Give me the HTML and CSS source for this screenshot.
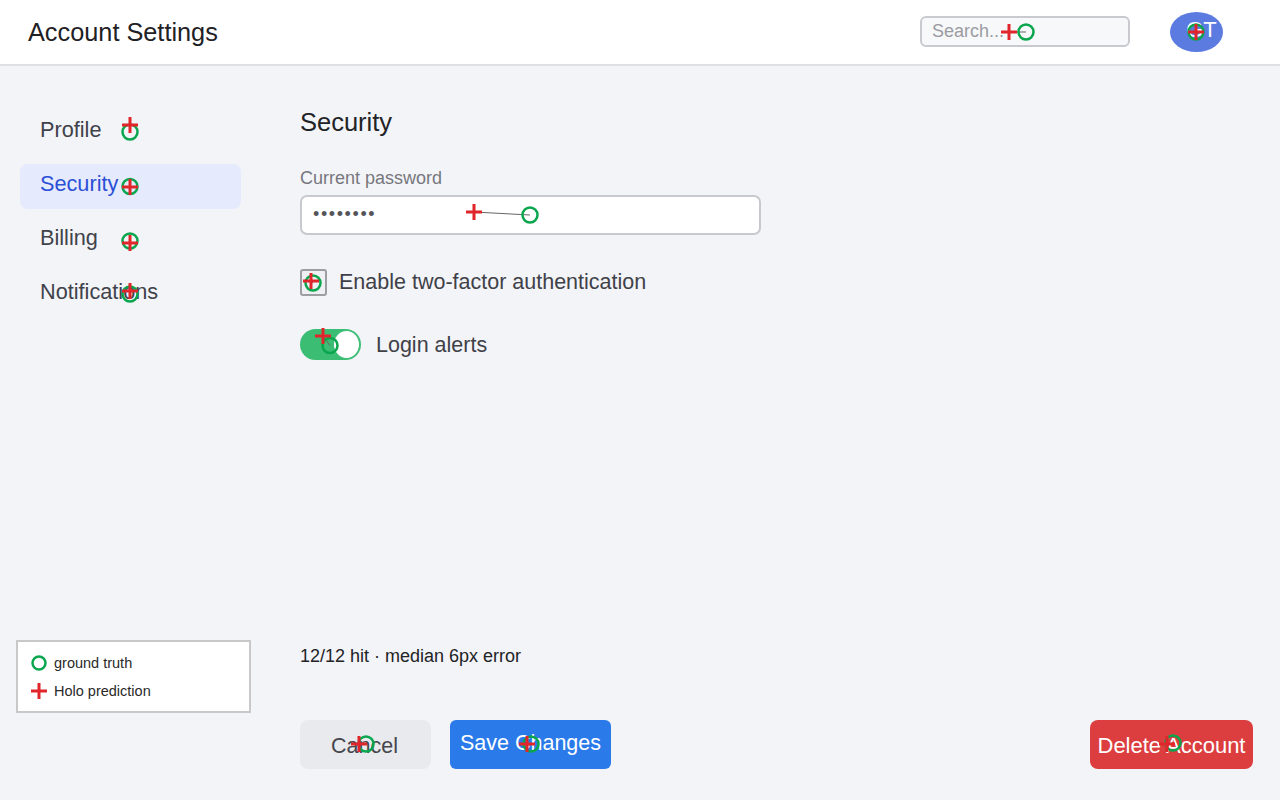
FILE: index.html
```html
<!DOCTYPE html>
<html lang="en">
<head>
<meta charset="utf-8">
<title>Account Settings</title>
<link rel="stylesheet" href="styles.css">
</head>
<body>
<div class="app">
  <header class="topbar">
    <h1 class="title">Account Settings</h1>
    <div class="topbar-right">
      <div class="search">Search...</div>
      <div class="avatar">GT</div>
    </div>
  </header>
  <div class="body">
    <nav class="sidebar">
      <a class="nav-item">Profile</a>
      <a class="nav-item active">Security</a>
      <a class="nav-item">Billing</a>
      <a class="nav-item">Notifications</a>
    </nav>
    <main class="main">
      <h2 class="section-title">Security</h2>
      <label class="field-label">Current password</label>
      <div class="input">&bull;&bull;&bull;&bull;&bull;&bull;&bull;&bull;</div>
      <div class="check-row">
        <span class="checkbox"></span>
        <span class="row-label">Enable two-factor authentication</span>
      </div>
      <div class="toggle-row">
        <span class="toggle"><span class="knob"></span></span>
        <span class="row-label">Login alerts</span>
      </div>
      <div class="actions">
        <button class="btn btn-cancel">Cancel</button>
        <button class="btn btn-save">Save Changes</button>
        <button class="btn btn-delete">Delete Account</button>
      </div>
    </main>
  </div>
</div>

<div class="legend">
  <div class="legend-row"><svg width="18" height="18" viewBox="0 0 18 18"><circle cx="9" cy="9" r="6.5" fill="none" stroke="#0aa64e" stroke-width="2.5"/></svg><span>ground truth</span></div>
  <div class="legend-row"><svg width="18" height="18" viewBox="0 0 18 18"><path d="M1 9H17M9 1V17" stroke="#e0262b" stroke-width="3"/></svg><span>Holo prediction</span></div>
</div>
<div class="stat">12/12 hit · median 6px error</div>

<svg class="marks" width="1280" height="800" viewBox="0 0 1280 800">
  <g stroke="#666" stroke-width="1">
    <line x1="1009" y1="32" x2="1026" y2="32"/>
    <line x1="130" y1="125" x2="130" y2="132"/>
    <line x1="130" y1="243" x2="130" y2="241"/>
    <line x1="130" y1="291" x2="130" y2="294"/>
    <line x1="474" y1="212" x2="530" y2="215"/>
    <line x1="311" y1="281" x2="313" y2="283"/>
    <line x1="323" y1="336" x2="330" y2="345.5"/>
    <line x1="359" y1="744" x2="366" y2="744"/>
    <line x1="527" y1="744" x2="531" y2="744"/>
    <line x1="1167" y1="744" x2="1173" y2="743"/>
  </g>
  <g fill="none" stroke="#0aa64e" stroke-width="2.5">
    <circle cx="1026" cy="32" r="7.5"/>
    <circle cx="1196" cy="32" r="7.5"/>
    <circle cx="130" cy="132" r="7.5"/>
    <circle cx="130" cy="186.5" r="7.5"/>
    <circle cx="130" cy="241" r="7.5"/>
    <circle cx="130" cy="294" r="7.5"/>
    <circle cx="530" cy="215" r="7.5"/>
    <circle cx="313" cy="283" r="7.5"/>
    <circle cx="330" cy="345.5" r="7.5"/>
    <circle cx="366" cy="744" r="7.5"/>
    <circle cx="531" cy="744" r="7.5"/>
    <circle cx="1173" cy="743" r="7.5"/>
  </g>
  <g stroke="#e0262b" stroke-width="3">
    <path d="M1001 32H1017M1009 24V40"/>
    <path d="M1188 32H1204M1196 24V40"/>
    <path d="M122 125H138M130 117V133"/>
    <path d="M122 187H138M130 179V195"/>
    <path d="M122 243H138M130 235V251"/>
    <path d="M122 291H138M130 283V299"/>
    <path d="M466 212H482M474 204V220"/>
    <path d="M303 281H319M311 273V289"/>
    <path d="M315 336H331M323 328V344"/>
    <path d="M351 744H367M359 736V752"/>
    <path d="M519 744H535M527 736V752"/>
    <path d="M1159 744H1175M1167 736V752"/>
  </g>
</svg>
</body>
</html>
```

FILE: styles.css
```css
* { box-sizing: border-box; }
html, body { margin: 0; padding: 0; }
body {
  width: 1280px;
  height: 800px;
  overflow: hidden;
  background: #f3f4f8;
  font-family: "Liberation Sans", Arial, sans-serif;
  color: #3f4148;
  position: relative;
}
.app {
  display: flex;
  flex-direction: column;
  height: 800px;
}
.topbar {
  height: 66px;
  flex: none;
  background: #ffffff;
  border-bottom: 2px solid #dfe0e5;
  display: flex;
  align-items: center;
  justify-content: space-between;
  padding: 0 57px 0 28px;
}
.title {
  margin: 0;
  font-size: 25.3px;
  font-weight: normal;
  color: #1f2125;
}
.topbar-right {
  display: flex;
  align-items: center;
  gap: 40px;
}
.search {
  width: 210px;
  height: 31px;
  border: 2px solid #c9cacf;
  border-radius: 6px;
  background: #f7f8fa;
  color: #9b9ca2;
  font-size: 18px;
  padding: 2px 0 0 10px;
  line-height: 22px;
  margin-top: -1px;
}
.avatar {
  width: 53px;
  height: 40px;
  border-radius: 50%;
  background: #5b7be0;
  color: #ffffff;
  font-size: 22px;
  display: flex;
  align-items: center;
  justify-content: center;
  padding: 0 0 5px 10px;
}
.body {
  flex: 1;
  display: flex;
}
.sidebar {
  width: 300px;
  flex: none;
  padding: 44px 59px 0 20px;
  display: flex;
  flex-direction: column;
  gap: 9px;
}
.nav-item {
  height: 45px;
  display: flex;
  align-items: center;
  padding: 0 0 6px 20px;
  font-size: 21.7px;
  color: #40424a;
  border-radius: 8px;
}
.nav-item.active {
  background: #e5eafc;
  color: #2b50d6;
}
.main {
  flex: 1;
  display: flex;
  flex-direction: column;
  padding: 42px 27px 31px 0;
}
.section-title {
  margin: 0;
  font-size: 25.5px;
  font-weight: normal;
  color: #222326;
  line-height: 28px;
}
.field-label {
  margin-top: 32px;
  font-size: 18px;
  color: #76777d;
  line-height: 20px;
}
.input {
  margin-top: 7px;
  width: 461px;
  height: 40px;
  background: #ffffff;
  border: 2px solid #c8c9ce;
  border-radius: 7px;
  padding: 0 0 1px 11px;
  display: flex;
  align-items: center;
  font-size: 18px;
  letter-spacing: 1.6px;
  color: #55565c;
}
.check-row {
  margin-top: 34px;
  display: flex;
  align-items: center;
  gap: 12px;
}
.checkbox {
  width: 27px;
  height: 27px;
  border: 2px solid #9c9ea4;
  border-radius: 3px;
  background: #eef0f3;
}
.row-label {
  font-size: 21.5px;
  color: #3f4148;
  padding-bottom: 1px;
}
.toggle-row {
  margin-top: 33px;
  display: flex;
  align-items: center;
  gap: 15px;
}
.toggle-row .row-label {
  padding: 2px 0 0 0;
}
.toggle {
  width: 61px;
  height: 31px;
  border-radius: 16px;
  background: #3cbd74;
  display: flex;
  justify-content: flex-end;
  align-items: center;
  padding: 0 1px;
}
.knob {
  width: 27px;
  height: 29px;
  border-radius: 50%;
  background: #ffffff;
  border: 1px solid #3cbd74;
}
.actions {
  margin-top: auto;
  display: flex;
  align-items: center;
  gap: 19px;
}
.btn {
  height: 49px;
  border: none;
  border-radius: 8px;
  font-family: "Liberation Sans", Arial, sans-serif;
  font-size: 21.5px;
  padding: 0;
}
.btn-cancel {
  width: 131px;
  background: #e9eaee;
  color: #45464c;
  padding: 4px 2px 0 0;
}
.btn-save {
  width: 161px;
  background: #2a7aea;
  color: #ffffff;
  border-radius: 6px;
  padding-bottom: 2px;
}
.btn-delete {
  margin-left: auto;
  width: 163px;
  background: #dc3d3e;
  color: #ffffff;
  font-size: 22px;
  padding-top: 3px;
}
.legend {
  position: absolute;
  left: 16px;
  top: 640px;
  width: 235px;
  height: 73px;
  background: #ffffff;
  border: 2px solid #c8c8c8;
  padding: 12px 0 0 12px;
  display: flex;
  flex-direction: column;
  gap: 10px;
  font-size: 14.5px;
  color: #2a2a2a;
}
.legend-row {
  display: flex;
  align-items: center;
  gap: 6px;
  height: 18px;
}
.stat {
  position: absolute;
  left: 300px;
  top: 646px;
  font-size: 18px;
  color: #222326;
}
.marks {
  position: absolute;
  left: 0;
  top: 0;
  pointer-events: none;
}
```
